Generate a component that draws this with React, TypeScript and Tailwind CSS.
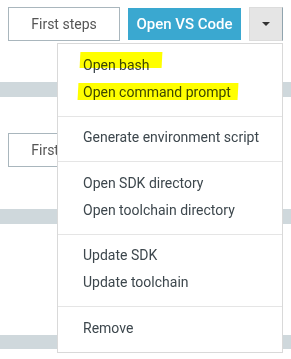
import React from "react";

const groups: string[][] = [
  ["Open bash", "Open command prompt"],
  ["Generate environment script"],
  ["Open SDK directory", "Open toolchain directory"],
  ["Update SDK", "Update toolchain"],
  ["Remove"],
];

function ButtonRow({ firstSteps = true }: { firstSteps?: boolean }) {
  return (
    <div className="flex items-center justify-end gap-2 px-2">
      {firstSteps && (
        <button className="w-[112px] h-[34px] border border-[#a9b6bd] bg-white text-[14px] text-[#555]">
          First steps
        </button>
      )}
      <button className="w-[113px] h-[32px] bg-[#3aa8d0] text-[15px] font-medium text-white">
        Open VS Code
      </button>
      <button className="w-[34px] h-[34px] flex items-center justify-center bg-[#e5e5e5] border border-[#dcdcdc] border-r-[#90a4ae]">
        <span className="w-0 h-0 border-l-[4px] border-r-[4px] border-t-[4px] border-l-transparent border-r-transparent border-t-[#333]" />
      </button>
    </div>
  );
}

export default function App() {
  return (
    <div
      className="relative w-[291px] h-[359px] overflow-hidden bg-white"
      style={{ fontFamily: "Roboto, 'Liberation Sans', sans-serif" }}
    >
      <div className="h-[82px] pt-[7px] bg-white">
        <ButtonRow />
      </div>
      <div className="h-[15px] bg-[#cfd8dc]" />
      <div className="h-[112px] pt-[36px] bg-white">
        <ButtonRow />
      </div>
      <div className="h-[15px] bg-[#cfd8dc]" />
      <div className="h-[111px] pt-[34px] bg-white">
        <ButtonRow firstSteps={false} />
      </div>
      <div className="h-[14px] bg-[#cfd8dc]" />

      {/* dropdown menu */}
      <div className="absolute left-[57px] top-[43px] w-[226px] h-[310px] bg-white border border-black/15 z-10">
        {groups.map((g, i) => (
          <div
            key={i}
            className={i > 0 ? "border-t border-[#e5e5e5] pt-[7.5px] pb-[10px]" : "pt-[7.5px] pb-[10px]"}
          >
            {g.map((item) => (
              <div key={item} className="h-[27px] flex items-center pl-[25px] text-[14px] text-[#3d474d]">
                {item}
              </div>
            ))}
          </div>
        ))}
      </div>

      {/* highlighter marks */}
      <div className="absolute left-[80px] top-[52px] w-[82px] h-[16px] bg-[#ffff00] mix-blend-multiply z-20 -skew-x-3" />
      <div className="absolute left-[78px] top-[83px] w-[160px] h-[17px] bg-[#ffff00] mix-blend-multiply z-20 -skew-x-3" />
    </div>
  );
}
